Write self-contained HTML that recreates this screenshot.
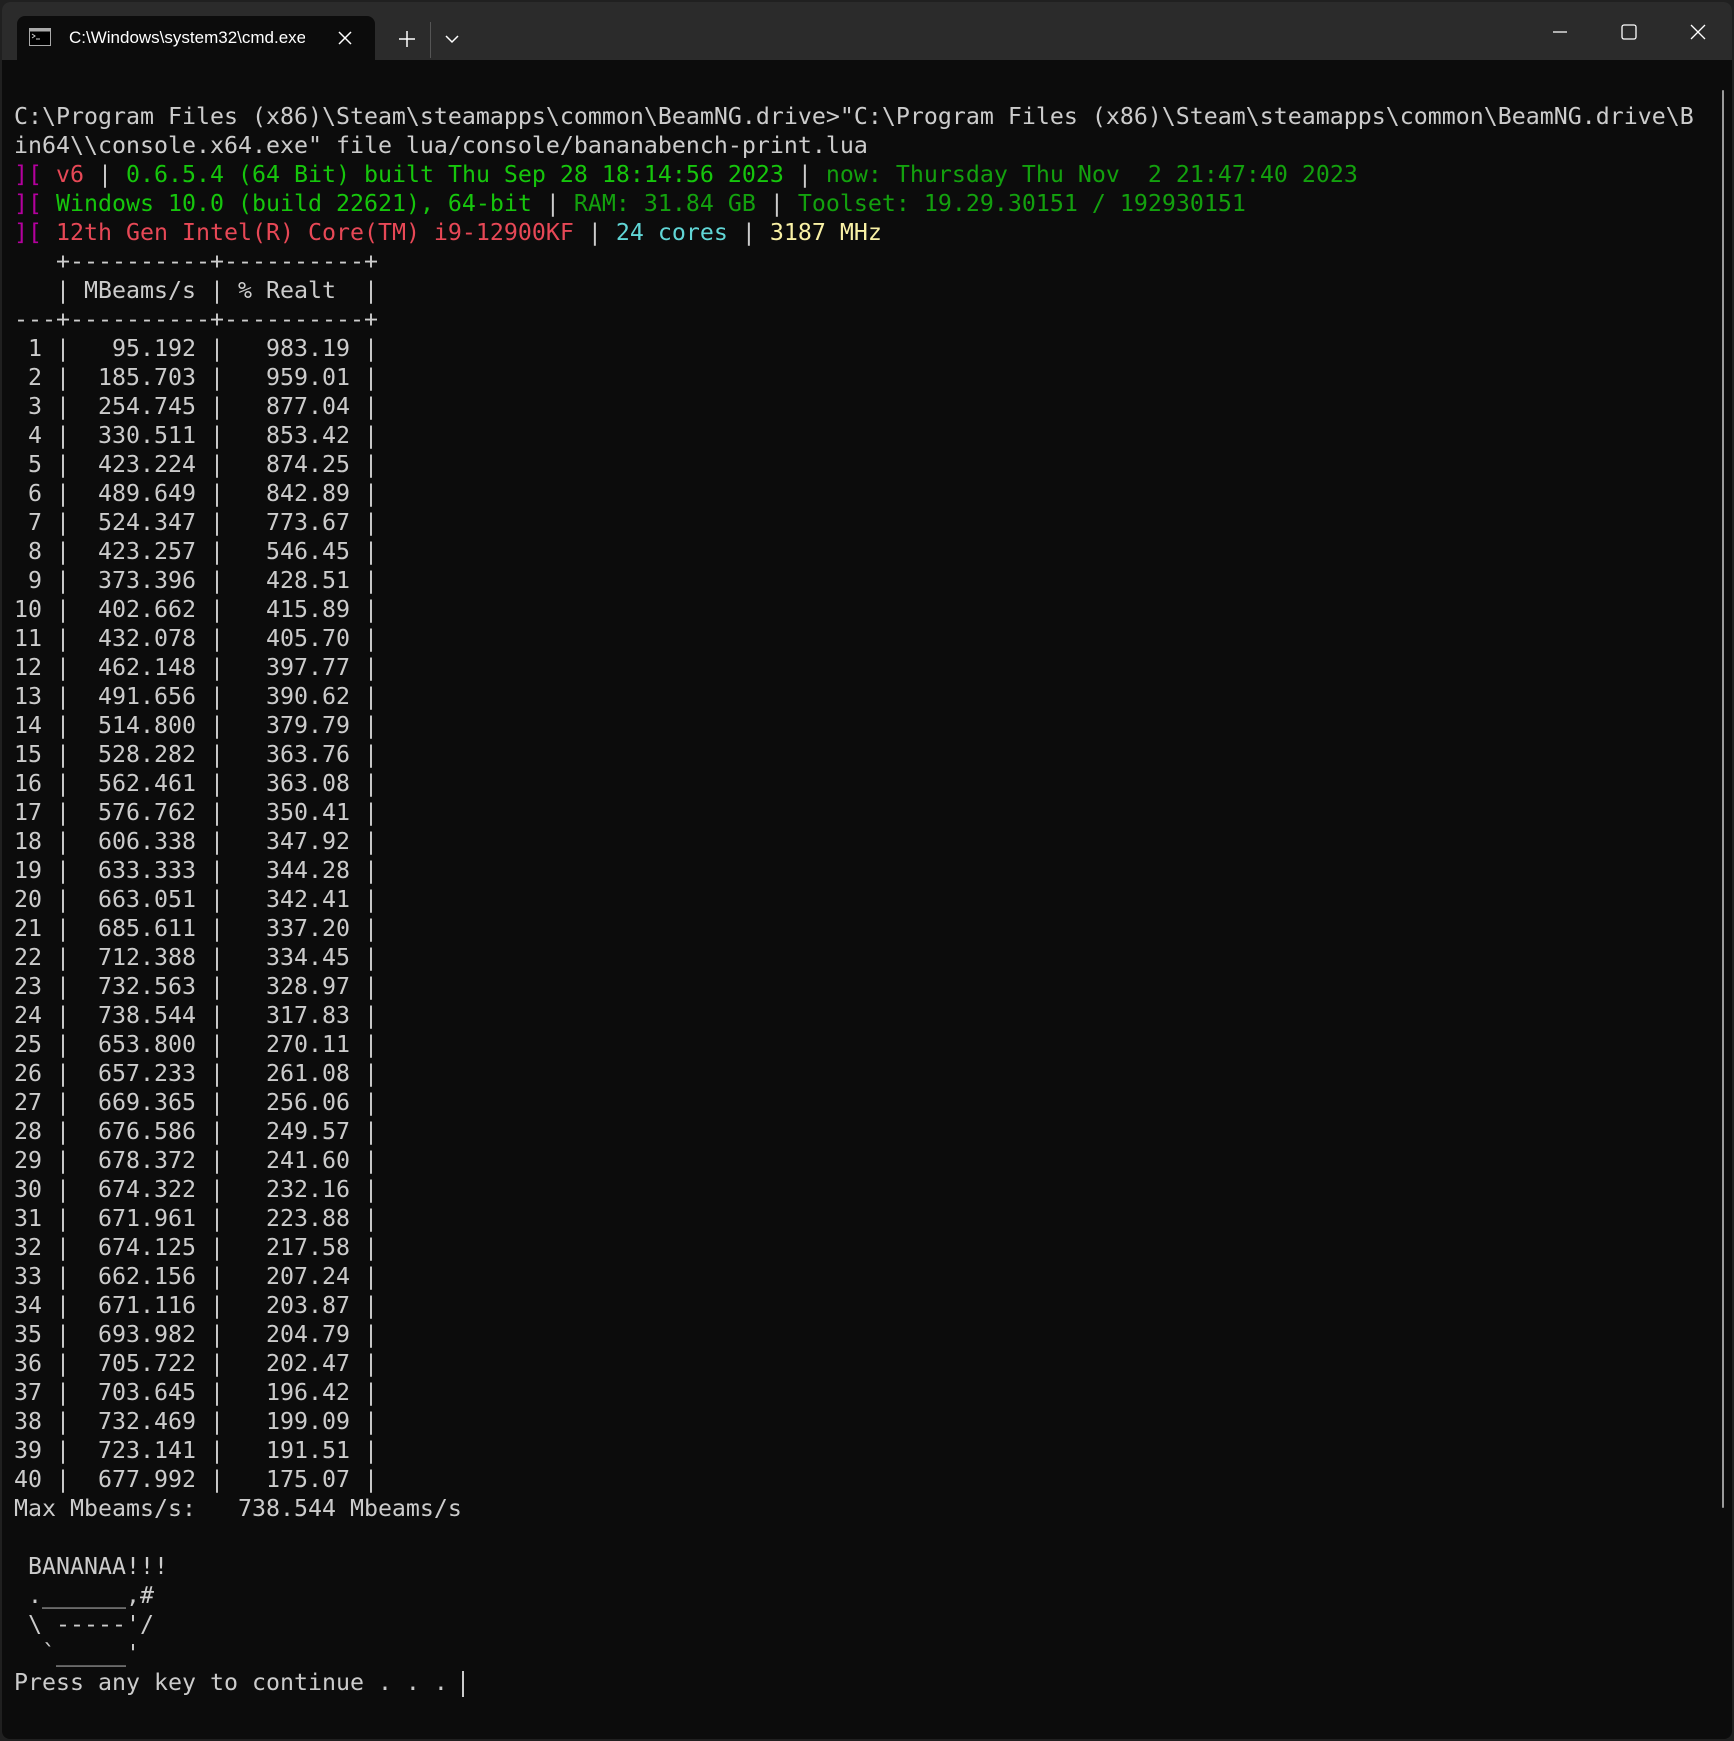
<!DOCTYPE html>
<html><head><meta charset="utf-8"><style>
html,body{margin:0;padding:0;background:#202020;}
body{width:1734px;height:1741px;position:relative;overflow:hidden;}
.win{position:absolute;left:2px;top:2px;width:1730px;height:1737px;background:#0c0c0c;border-radius:8px;overflow:hidden;}
.bar{position:absolute;left:0;top:0;width:100%;height:58px;background:#2b2b2b;}
.tab{position:absolute;left:15px;top:14px;width:358px;height:44px;background:#0c0c0c;border-radius:8px 8px 0 0;}
.tabt{position:absolute;left:52px;top:12px;font:17px "Liberation Sans",sans-serif;color:#fff;white-space:nowrap;width:236px;overflow:hidden;}
pre{position:absolute;left:12px;top:100px;margin:0;font-family:"DejaVu Sans Mono","Liberation Mono",monospace;font-size:23.25px;line-height:29px;color:#cccccc;}
.m{color:#b4009e}.r{color:#e74856}.g{color:#16c60c}.d{color:#13a10e}.c{color:#61d6d6}.y{color:#f9f1a5}
.sb{position:absolute;left:1720px;top:88px;width:2px;height:1418px;background:#9a9a9a;border-radius:1px;}
</style></head><body>
<div class="win">
<div class="bar">
<div class="tab">
<svg style="position:absolute;left:12px;top:12px" width="22" height="18"><rect x="0.5" y="0.5" width="21" height="17" fill="#000" stroke="#aaa"/><rect x="0.5" y="0.5" width="21" height="3" fill="#aaa"/><path d="M3 6l3 2-3 2M7 11h4" stroke="#ccc" fill="none"/></svg>
<div class="tabt">C:\Windows\system32\cmd.exe</div>
<svg style="position:absolute;left:320px;top:14px" width="16" height="16"><path d="M2 2L14 14M14 2L2 14" stroke="#fff" stroke-width="1.5"/></svg>
</div>
<svg style="position:absolute;left:396px;top:28px" width="18" height="18"><path d="M9 1V17M1 9H17" stroke="#fff" stroke-width="1.5"/></svg>
<div style="position:absolute;left:428px;top:20px;width:1px;height:36px;background:#555"></div>
<svg style="position:absolute;left:443px;top:32px" width="14" height="10"><path d="M1 2L7 8L13 2" stroke="#fff" stroke-width="1.5" fill="none"/></svg>
<svg style="position:absolute;left:1550px;top:22px" width="16" height="16"><path d="M1 8H15" stroke="#fff" stroke-width="1.3"/></svg>
<svg style="position:absolute;left:1619px;top:22px" width="16" height="16"><rect x="1" y="1" width="14" height="14" rx="2" stroke="#fff" stroke-width="1.3" fill="none"/></svg>
<svg style="position:absolute;left:1688px;top:22px" width="16" height="16"><path d="M1 1L15 15M15 1L1 15" stroke="#fff" stroke-width="1.3"/></svg>
</div>
<pre>C:\Program Files (x86)\Steam\steamapps\common\BeamNG.drive>"C:\Program Files (x86)\Steam\steamapps\common\BeamNG.drive\B
in64\\console.x64.exe" file lua/console/bananabench-print.lua
<span class="m">][</span> <span class="r">v6</span> | <span class="g">0.6.5.4 (64 Bit) built Thu Sep 28 18:14:56 2023</span> | <span class="d">now: Thursday Thu Nov  2 21:47:40 2023</span>
<span class="m">][</span> <span class="g">Windows 10.0 (build 22621), 64-bit</span> | <span class="d">RAM: 31.84 GB</span> | <span class="d">Toolset: 19.29.30151 / 192930151</span>
<span class="m">][</span> <span class="r">12th Gen Intel(R) Core(TM) i9-12900KF</span> | <span class="c">24 cores</span> | <span class="y">3187 MHz</span>
   +----------+----------+
   | MBeams/s | % Realt  |
---+----------+----------+
 1 |   95.192 |   983.19 |
 2 |  185.703 |   959.01 |
 3 |  254.745 |   877.04 |
 4 |  330.511 |   853.42 |
 5 |  423.224 |   874.25 |
 6 |  489.649 |   842.89 |
 7 |  524.347 |   773.67 |
 8 |  423.257 |   546.45 |
 9 |  373.396 |   428.51 |
10 |  402.662 |   415.89 |
11 |  432.078 |   405.70 |
12 |  462.148 |   397.77 |
13 |  491.656 |   390.62 |
14 |  514.800 |   379.79 |
15 |  528.282 |   363.76 |
16 |  562.461 |   363.08 |
17 |  576.762 |   350.41 |
18 |  606.338 |   347.92 |
19 |  633.333 |   344.28 |
20 |  663.051 |   342.41 |
21 |  685.611 |   337.20 |
22 |  712.388 |   334.45 |
23 |  732.563 |   328.97 |
24 |  738.544 |   317.83 |
25 |  653.800 |   270.11 |
26 |  657.233 |   261.08 |
27 |  669.365 |   256.06 |
28 |  676.586 |   249.57 |
29 |  678.372 |   241.60 |
30 |  674.322 |   232.16 |
31 |  671.961 |   223.88 |
32 |  674.125 |   217.58 |
33 |  662.156 |   207.24 |
34 |  671.116 |   203.87 |
35 |  693.982 |   204.79 |
36 |  705.722 |   202.47 |
37 |  703.645 |   196.42 |
38 |  732.469 |   199.09 |
39 |  723.141 |   191.51 |
40 |  677.992 |   175.07 |
Max Mbeams/s:   738.544 Mbeams/s

 BANANAA!!!
 .______,#
 \ -----'/
  `_____'
Press any key to continue . . . <span style="display:inline-block;width:2px;height:26px;background:#ccc;vertical-align:middle"></span></pre>
<div class="sb"></div>
</div>
</body></html>
